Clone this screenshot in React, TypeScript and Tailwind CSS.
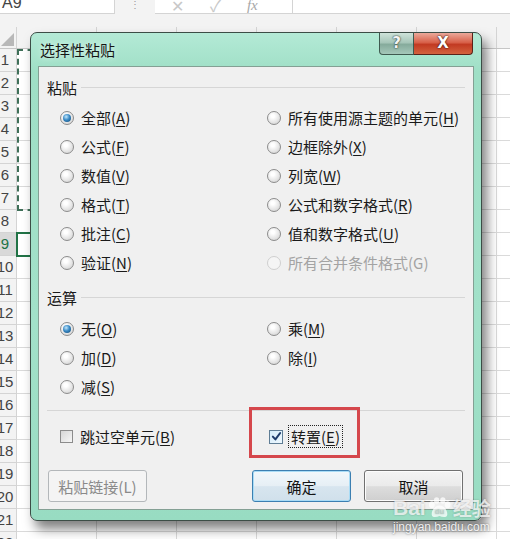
import clsx from "clsx";

type Opt = { text: string; k?: string; checked?: boolean; disabled?: boolean };

const pasteRows: [Opt, Opt][] = [
    [{ text: '全部', k: 'A', checked: true }, { text: '所有使用源主题的单元', k: 'H' }],
    [{ text: '公式', k: 'F' }, { text: '边框除外', k: 'X' }],
    [{ text: '数值', k: 'V' }, { text: '列宽', k: 'W' }],
    [{ text: '格式', k: 'T' }, { text: '公式和数字格式', k: 'R' }],
    [{ text: '批注', k: 'C' }, { text: '值和数字格式', k: 'U' }],
    [{ text: '验证', k: 'N' }, { text: '所有合并条件格式(G)', disabled: true }],
];

const opRows: [Opt, Opt | null][] = [
    [{ text: '无', k: 'O', checked: true }, { text: '乘', k: 'M' }],
    [{ text: '加', k: 'D' }, { text: '除', k: 'I' }],
    [{ text: '减', k: 'S' }, null],
];

function Radio({ checked, disabled }: { checked?: boolean; disabled?: boolean }) {
    return (
        <span className={clsx(
            'flex h-[14px] w-[14px] shrink-0 items-center justify-center rounded-full border',
            disabled
                ? 'border-[#cfcfcf] bg-[#f5f5f5]'
                : 'border-[#8c8c8c] bg-[radial-gradient(circle_at_40%_35%,#ffffff_15%,#e4e4e4_60%,#c9c9c9_100%)]'
        )}>
            {checked && (
                <span className="h-[8px] w-[8px] rounded-full bg-[radial-gradient(circle_at_40%_35%,#c4e8fc_0%,#3b8bc6_45%,#0e4470_100%)]" />
            )}
        </span>
    );
}

function Label({ opt }: { opt: Opt }) {
    if (!opt.k) return <span>{opt.text}</span>;
    return (
        <span>
            {opt.text}(<u className="underline-offset-2">{opt.k}</u>)
        </span>
    );
}

function Option({ opt }: { opt: Opt }) {
    return (
        <div className={clsx('flex items-center gap-[7px]', opt.disabled ? 'text-[#a3a3a3]' : 'text-[#1a1a1a]')}>
            <Radio checked={opt.checked} disabled={opt.disabled} />
            <Label opt={opt} />
        </div>
    );
}

function Group({ title }: { title: string }) {
    return (
        <div className="flex h-[24px] items-center gap-[4px]">
            <span className="text-[#1a1a1a]">{title}</span>
            <span className="h-px flex-1 bg-[#d6d6d6]" />
        </div>
    );
}

function Check() {
    return (
        <span className="flex h-[14px] w-[14px] shrink-0 items-center justify-center border border-[#5f7d95] bg-[linear-gradient(135deg,#d3ebfa,#eef8fe)]">
            <svg viewBox="0 0 12 12" className="h-[11px] w-[11px]">
                <path d="M2 6.2 L4.8 9.2 L10 2.2" fill="none" stroke="#1d3b6b" strokeWidth="2.2" strokeLinecap="round" strokeLinejoin="round" />
            </svg>
        </span>
    );
}

function Sheet() {
    const rows = Array.from({ length: 22 }, (_, i) => i + 1);
    return (
        <>
            {/* formula bar */}
            <div className="flex h-[15px] bg-[#f3f3f3]">
                <div className="h-[14px] w-[115px] overflow-hidden border-b border-r border-[#d4d4d4] bg-white">
                    <span className="-mt-[9px] block pl-[2px] font-['Liberation_Sans',sans-serif] text-[16px] text-[#444]">A9</span>
                </div>
                <div className="flex w-[40px] justify-center text-[10px] leading-[8px] text-[#999]">⋮</div>
                <div className="flex h-[14px] w-[138px] items-end gap-[26px] overflow-hidden border-b border-r border-[#d4d4d4] bg-white pl-[16px] text-[#c8c8c8]">
                    <span className="-mb-[4px] text-[16px]">✕</span>
                    <span className="-mb-[4px] text-[16px]">✓</span>
                    <span className="-mb-[3px] font-['Liberation_Serif',serif] text-[15px] italic text-[#a8a8a8]">fx</span>
                </div>
                <div className="h-[14px] flex-1 border-b border-[#d4d4d4] bg-white" />
            </div>
            <div className="h-[12px] bg-[#f3f3f3]" />
            {/* column header */}
            <div className="flex h-[22px] border-b border-[#c6c6c6] bg-[#f3f3f3]">
                <div className="flex w-[17px] items-end justify-end border-r border-[#d4d4d4] pb-[2px] pr-[2px]">
                    <svg viewBox="0 0 13 13" className="h-[13px] w-[13px]">
                        <path d="M13 0 L13 13 L0 13 Z" fill="#b8b8b8" />
                    </svg>
                </div>
                {[0, 1, 2, 3, 4, 5].map((c) => (
                    <div key={c} className="w-[80px] border-r border-[#d4d4d4]" />
                ))}
            </div>
            {rows.map((r) => (
                <div key={r} className="flex h-[23px]">
                    <div className={clsx(
                        'w-[17px] overflow-hidden border-b border-r border-[#d4d4d4]',
                        r === 9 ? 'bg-[#d9d9d9] text-[#217346]' : 'bg-[#f3f3f3] text-[#444]'
                    )}>
                        <span className="-ml-[7px] block w-[24px] text-center font-['Liberation_Sans',sans-serif] text-[15px] leading-[22px]">{r}</span>
                    </div>
                    {[0, 1, 2, 3, 4, 5].map((c) => (
                        <div key={c} className="w-[80px] border-b border-r border-[#dadada]" />
                    ))}
                    <div className="flex-1 border-b border-[#dadada]" />
                </div>
            ))}
            {/* copied range and active cell */}
            <div className="absolute left-[17px] top-[49px] h-[162px] w-[80px] border-2 border-dashed border-[#3f6f58]" />
            <div className="absolute left-[16px] top-[232px] h-[25px] w-[80px] border-2 border-[#217346]" />
        </>
    );
}

export default function App() {
    return (
        <div className="relative h-[539px] w-[510px] overflow-hidden bg-white font-['Noto_Sans_CJK_SC','Noto_Sans',sans-serif]">
            <Sheet />

            {/* dialog */}
            <div className="absolute left-[30px] top-[32px] flex h-[489px] w-[452px] flex-col rounded-[7px] border border-[#3c4d46] bg-[linear-gradient(180deg,#b4ead6_0%,#9fdfc6_8%,#a2e1c9_60%,#98dcc2_100%)] shadow-[5px_8px_12px_rgba(0,0,0,0.5)]">
                <div className="flex h-[33px] shrink-0">
                    <div className="flex flex-1 items-center pl-[9px] text-[15px] leading-none text-[#151515] [text-shadow:0_0_6px_rgba(255,255,255,0.8)]">
                        选择性粘贴
                    </div>
                    <div className="mr-[8px] flex h-[22px] self-start">
                        <div className="flex w-[35px] items-center justify-center rounded-bl-[4px] border border-t-0 border-[#3f5a50] bg-[linear-gradient(180deg,#cfe3da_0%,#a7c6b9_45%,#86ab9c_55%,#a5c8ba_100%)] font-['DejaVu_Sans',sans-serif] text-[15px] font-bold leading-none text-[#f4f4f4] [text-shadow:0_0_1px_#2d3f38,0_0_2px_#2d3f38]">
                            ?
                        </div>
                        <div className="flex w-[59px] items-center justify-center rounded-br-[4px] border border-l-0 border-t-0 border-[#5a2219] bg-[linear-gradient(180deg,#eba99a_0%,#d8614a_45%,#c23a22_55%,#d4623e_100%)] font-['DejaVu_Sans',sans-serif] text-[15px] font-bold leading-none text-white [text-shadow:0_0_1px_#3a120c,0_0_2px_#3a120c]">
                            X
                        </div>
                    </div>
                </div>

                <div className="relative mx-[7px] mb-[10px] flex-1 border border-[#84a094] bg-[#f0f0f0] px-[8px] pt-[8px] text-[15px] leading-none">
                    <Group title="粘贴" />
                    <div className="mt-[4px]">
                        {pasteRows.map(([a, b], i) => (
                            <div key={i} className="flex h-[29px] items-center">
                                <div className="w-[220px] pl-[13px]"><Option opt={a} /></div>
                                <Option opt={b} />
                            </div>
                        ))}
                    </div>

                    <div className="mt-[8px]"><Group title="运算" /></div>
                    <div className="mt-[5px]">
                        {opRows.map(([a, b], i) => (
                            <div key={i} className="flex h-[29px] items-center">
                                <div className="w-[220px] pl-[13px]"><Option opt={a} /></div>
                                {b && <Option opt={b} />}
                            </div>
                        ))}
                    </div>

                    <div className="mt-[9px] h-px bg-[#d6d6d6]" />

                    <div className="mt-[11px] flex h-[29px] items-center">
                        <div className="flex w-[222px] items-center gap-[7px] pl-[13px] text-[#1a1a1a]">
                            <span className="h-[13px] w-[13px] shrink-0 border border-[#8c8c8c] bg-[linear-gradient(135deg,#d6d6d6,#f7f7f7)]" />
                            <span>跳过空单元(<u className="underline-offset-2">B</u>)</span>
                        </div>
                        <div className="flex items-center gap-[5px] text-[#1a1a1a]">
                            <Check />
                            <span className="border border-dotted border-[#222] px-[2px] py-[3px]">
                                转置(<u className="underline-offset-2">E</u>)
                            </span>
                        </div>
                    </div>

                    <div className="mt-[19px] flex items-center pr-[2px]">
                        <button className="ml-[1px] h-[32px] w-[99px] rounded-[3px] border border-[#b3b7ba] bg-[#f4f4f4] text-[15px] text-[#8a8a8a]">
                            粘贴链接(L)
                        </button>
                        <div className="flex-1" />
                        <button className="h-[32px] w-[99px] rounded-[3px] border border-[#3c7fb1] bg-[linear-gradient(180deg,#f1f7fb_0%,#e6eff5_50%,#d7e5ef_52%,#d0e0eb_100%)] text-[15px] text-[#151515] shadow-[inset_0_0_0_1px_#a9dcf6]">
                            确定
                        </button>
                        <button className="ml-[13px] h-[32px] w-[99px] rounded-[3px] border border-[#707070] bg-[linear-gradient(180deg,#f3f3f3_0%,#ebebeb_50%,#dddddd_52%,#cfcfcf_100%)] text-[15px] text-[#151515] shadow-[inset_0_0_0_1px_#fcfcfc]">
                            取消
                        </button>
                    </div>

                    {/* highlight annotation */}
                    <div className="absolute left-[210px] top-[340px] h-[51px] w-[111px] border-[3px] border-[#d5474c]" />
                </div>
            </div>

            {/* watermark */}
            <div className="absolute left-[393px] top-[497px] flex items-center text-[21px] font-bold leading-none text-white/75 [text-shadow:0_0_2px_rgba(0,0,0,0.25)]">
                <span className="font-['Liberation_Sans',sans-serif]">Bai</span>
                <svg viewBox="0 0 26 22" className="mx-[1px] h-[21px] w-[25px]">
                    <g fill="rgba(255,255,255,0.75)">
                        <ellipse cx="5" cy="8" rx="3" ry="3.6" />
                        <ellipse cx="10" cy="3.6" rx="2.8" ry="3.3" />
                        <ellipse cx="16.5" cy="3.6" rx="2.8" ry="3.3" />
                        <ellipse cx="21.5" cy="8" rx="3" ry="3.6" />
                        <path d="M13 9 C8 9 4 15 5 19 C6 22 10 21 13 20 C16 21 20 22 21 19 C22 15 18 9 13 9 Z" />
                    </g>
                    <text x="13" y="18" textAnchor="middle" fontSize="8" fontWeight="bold" fill="#b9cfc7" fontFamily="Liberation Sans, sans-serif">du</text>
                </svg>
                <span className="text-[19px]">经验</span>
            </div>
            <div className="absolute left-[393px] top-[521px] font-['Liberation_Sans',sans-serif] text-[12px] leading-none text-white/90 [text-shadow:0_0_2px_rgba(0,0,0,0.6)]">
                jingyan.baidu.com
            </div>
        </div>
    );
}
